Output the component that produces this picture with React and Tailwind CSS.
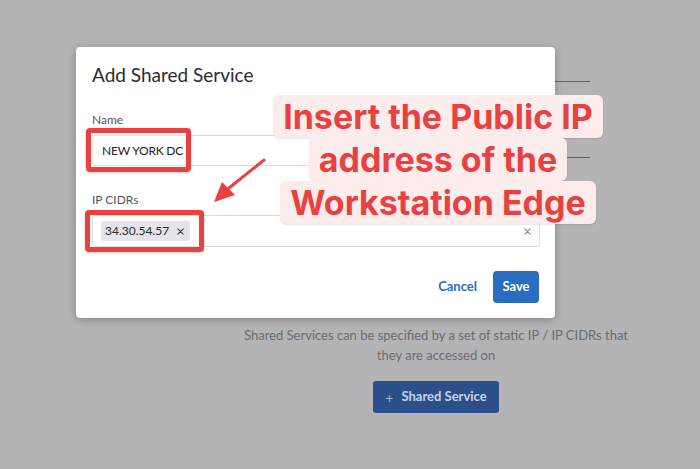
import React from "react";

const ui = { fontFamily: "Lato, 'Noto Sans', sans-serif" };
const note = { fontFamily: "Inter, Roboto, sans-serif" };

function Cross({ className }) {
  return (
    <svg className={className} viewBox="0 0 10 10" fill="none" stroke="currentColor" strokeWidth={1.3} strokeLinecap="round">
      <path d="M2 2l6 6M8 2l-6 6" />
    </svg>
  );
}

export default function App() {
  return (
    <div className="relative w-[700px] h-[469px] overflow-hidden bg-[#b4b4b6]" style={ui}>
      {/* page behind the overlay */}
      <div className="ml-[243px] w-[386px] flex flex-col items-center">
        <div className="mt-[81px] w-[308px] h-px bg-[#606068]" />
        <div className="mt-[75px] w-[308px] h-px bg-[#606068]" />
        <p className="mt-[167px] text-center text-[13px] leading-[20px] text-[#6b6b72]">
          Shared Services can be specified by a set of static IP / IP CIDRs that they are accessed on
        </p>
        <button className="mt-[16px] h-[32px] w-[126px] rounded-[3px] bg-[#2a4f8a] flex items-center justify-center gap-[8px] text-[13px] font-bold text-[#c9d1e1]">
          <span className="text-[#9fb0cc] font-normal text-[14px]">+</span>
          Shared Service
        </button>
      </div>

      {/* modal */}
      <div className="absolute left-[76px] top-[47px] w-[479px] h-[271px] rounded-[4px] bg-white shadow-[0_2px_8px_rgba(0,0,0,0.25)] px-[16px] pt-[16px]">
        <h2 className="text-[19px] leading-[24px] text-[#2b2b30]">Add Shared Service</h2>
        <label className="block mt-[25px] text-[12px] leading-[16px] text-[#55555c]">Name</label>
        <div className="mt-[7px] h-[31px] w-[448px] rounded-[3px] border border-[#dedee3] flex items-center px-[9px] text-[12px] tracking-[-0.2px] text-[#222]">
          NEW YORK DC
        </div>
        <label className="block mt-[26px] text-[12px] leading-[16px] text-[#55555c]">IP CIDRs</label>
        <div className="mt-[7px] h-[32px] w-[448px] rounded-[3px] border border-[#dedee3] flex items-center pl-[8px] pr-[7px]">
          <span className="h-[20px] w-[89px] rounded-[3px] bg-[#e4e4ea] flex items-center justify-between pl-[4px] pr-[5px] text-[12px] text-[#2b2b30]">
            34.30.54.57
            <Cross className="w-[9px] h-[9px] text-[#444]" />
          </span>
          <Cross className="ml-auto w-[9px] h-[9px] text-[#8a8a90]" />
        </div>
        <div className="mt-[24px] flex items-center justify-end gap-[16px]">
          <button className="text-[13px] font-bold text-[#2a6cc0]">Cancel</button>
          <button className="h-[32px] w-[46px] rounded-[4px] bg-[#2a6cc0] text-[13px] font-bold text-white">Save</button>
        </div>
      </div>

      {/* annotation highlights */}
      <div className="absolute left-[86px] top-[128px] w-[105px] h-[44px] rounded-[4px] border-[5px] border-[#e84141] shadow-[0_1px_3px_rgba(0,0,0,0.2)]" />
      <div className="absolute left-[85px] top-[210px] w-[119px] h-[42px] rounded-[4px] border-[5px] border-[#e84141] shadow-[0_1px_3px_rgba(0,0,0,0.2)]" />

      <svg className="absolute left-[205px] top-[150px] w-[70px] h-[60px]" viewBox="0 0 70 60">
        <path d="M59 10 L24 38" stroke="#e84141" strokeWidth={3} strokeLinecap="round" />
        <polygon points="9,52 17,32 30,45" fill="#e84141" />
      </svg>

      <div className="absolute left-[238px] top-[95px] w-[400px] flex flex-col items-center text-[34px] leading-[43px] font-bold text-[#e84141]" style={note}>
        <span className="px-[10px] rounded-[6px] bg-[#fcecec] shadow-[0_1px_2px_rgba(0,0,0,0.1)]">Insert the Public IP</span>
        <span className="px-[10px] rounded-[6px] bg-[#fcecec] shadow-[0_1px_2px_rgba(0,0,0,0.1)]">address of the</span>
        <span className="px-[10px] rounded-[6px] bg-[#fcecec] shadow-[0_1px_2px_rgba(0,0,0,0.1)]">Workstation Edge</span>
      </div>
    </div>
  );
}
